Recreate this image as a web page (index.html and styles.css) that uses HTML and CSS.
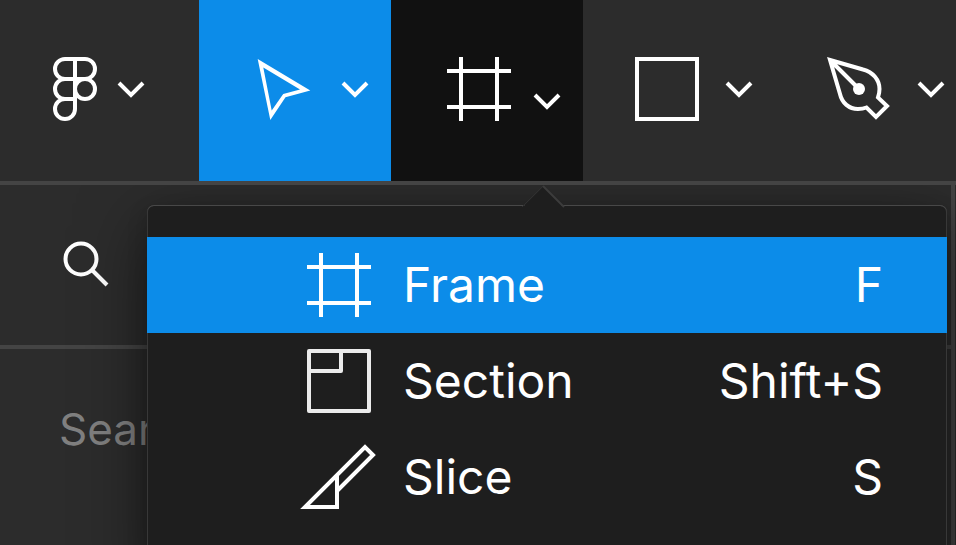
FILE: index.html
```html
<!DOCTYPE html>
<html lang="en">
<head>
<meta charset="utf-8">
<title>Design editor</title>
<link rel="stylesheet" href="styles.css">
</head>
<body>
<div class="app">
  <header class="toolbar">
    <button class="tool tool-main" aria-label="Main menu">
      <svg class="icon" viewBox="0 0 80 80"><path d="M52 9H42a10 10 0 0 0 0 20H62a10 10 0 0 0 0-20H52V59a10 10 0 1 1-10-10H52M52 29H42a10 10 0 0 0 0 20"/><circle cx="62" cy="39" r="10"/></svg>
      <svg class="chevron" viewBox="0 0 28 28"><path d="M2 7l12 12L26 7"/></svg>
    </button>
    <button class="tool tool-selected" aria-label="Move">
      <svg class="icon" viewBox="0 0 80 80"><path class="solid" fill-rule="evenodd" d="M10.7 9L63.3 40.5L38.5 47.3L23.3 70ZM16.3 17.5L24.7 60.5L36.2 44L53 39.5Z"/></svg>
      <svg class="chevron" viewBox="0 0 28 28"><path d="M2 7l12 12L26 7"/></svg>
    </button>
    <button class="tool tool-open" aria-label="Region tools" aria-expanded="true">
      <svg class="icon" viewBox="0 0 80 80"><path d="M22 7v64M58 7v64M8 21h64M8 57h64"/></svg>
      <svg class="chevron" viewBox="0 0 28 28"><path d="M2 7l12 12L26 7"/></svg>
    </button>
    <button class="tool" aria-label="Shape tools">
      <svg class="icon" viewBox="0 0 80 80"><path d="M6 9h60v60H6z"/></svg>
      <svg class="chevron" viewBox="0 0 28 28"><path d="M2 7l12 12L26 7"/></svg>
    </button>
    <button class="tool" aria-label="Drawing tools">
      <svg class="icon" viewBox="0 0 80 80"><path d="M7 10L40 19.5C50 22 56.5 30 56.5 39C56.5 42 56 44.500 55 47.500L64 56L53 67L43.500 57.500C41 58.500 38 59 35 59C26 59 19 53 17 44ZM7 10L36 39"/><circle class="solid" cx="36" cy="39" r="6"/></svg>
      <svg class="chevron" viewBox="0 0 28 28"><path d="M2 7l12 12L26 7"/></svg>
    </button>
  </header>

  <aside class="panel">
    <div class="search-row">
      <button class="search" aria-label="Search">
        <svg class="search-icon" viewBox="0 0 48 48"><circle cx="19" cy="19" r="15.5"/><path d="M30 30l15 15"/></svg>
      </button>
    </div>
    <p class="hint">Search</p>
  </aside>

  <div class="menu" role="menu">
    <svg class="arrow" viewBox="0 0 44 24"><path class="arrow-fill" d="M0 24L22 2L44 24z"/><path class="arrow-left" d="M1 22L22 1"/><path class="arrow-right" d="M22 1L43 22"/></svg>
    <button class="item item-active" role="menuitem">
      <svg class="icon" viewBox="0 -1 80 80"><path d="M22 7v64M58 7v64M8 21h64M8 57h64"/></svg>
      <span class="label">Frame</span><span>F</span>
    </button>
    <button class="item" role="menuitem">
      <svg class="icon icon-section" viewBox="0 -1 80 80"><path d="M10 9h60v60H10zM10 29H42V9"/></svg>
      <span class="label">Section</span><span>Shift+S</span>
    </button>
    <button class="item" role="menuitem">
      <svg class="icon icon-slice" viewBox="0 -1 80 80"><path d="M38 37V69H6L66 9L74 17L38 53"/></svg>
      <span class="label">Slice</span><span>S</span>
    </button>
  </div>
</div>
</body>
</html>
```
FILE: styles.css
```css
* {
  box-sizing: border-box;
}

body {
  margin: 0;
  background: #2c2c2c;
  color: #fff;
  font-family: Inter, "Liberation Sans", sans-serif;
}

button {
  border: 0;
  margin: 0;
  background: none;
  color: inherit;
  font: inherit;
  text-align: left;
}

svg {
  display: block;
  flex: none;
  fill: none;
  stroke: #fff;
  stroke-width: 4;
}

.solid {
  fill: #fff;
  stroke: none;
}

.app {
  position: relative;
  display: flex;
  flex-direction: column;
  height: 100vh;
  overflow: hidden;
}

.toolbar {
  z-index: 1;
  display: flex;
  flex: none;
  overflow: hidden;
  border-bottom: 4px solid #444;
  background: #2c2c2c;
}

.tool {
  display: flex;
  flex: none;
  align-items: center;
  gap: 14px;
  width: 192px;
  padding: 50px 0 51px 48px;
}

.tool-main {
  width: 199px;
  padding-left: 23px;
}

.tool-selected {
  background: #0c8ce9;
}

.tool-open {
  background: #111;
}

.tool-open .chevron {
  margin-top: 24px;
}

.icon {
  width: 80px;
  height: 80px;
}

.chevron {
  width: 28px;
  height: 28px;
}

.panel {
  flex: 1;
  margin-right: 1px;
  border-right: 4px solid #444;
}

.search-row {
  height: 164px;
  padding: 55px 62px;
  border-bottom: 4px solid #444;
}

.search {
  padding: 0;
}

.search-icon {
  width: 48px;
  height: 48px;
}

.hint {
  margin: 0;
  padding: 48px 59px;
  color: #808080;
  font-size: 44px;
  line-height: 64px;
}

.menu {
  position: absolute;
  top: 205px;
  right: 9px;
  bottom: -32px;
  left: 147px;
  padding-top: 32px;
  border-radius: 7px;
  background: #1e1e1e;
  box-shadow: inset 0 1px 0 #484848, inset 0 0 0 1px #383838, 0 20px 68px rgba(0, 0, 0, 0.5), 0 8px 20px rgba(0, 0, 0, 0.2);
}

.arrow {
  position: absolute;
  top: -20px;
  left: 374px;
  width: 44px;
  height: 24px;
  stroke-width: 1;
}

.arrow-fill {
  fill: #1e1e1e;
  stroke: none;
}

.arrow-left {
  stroke: #303030;
}

.arrow-right {
  stroke: #3c3c3c;
  stroke-width: 2;
}

.item {
  display: flex;
  align-items: center;
  gap: 24px;
  width: 100%;
  height: 96px;
  padding: 0 64px 0 152px;
  font-size: 48px;
  line-height: 64px;
}

.item-active {
  background: #0c8ce9;
}

.label {
  flex: 1;
}

.icon-section {
  stroke: #ebebeb;
  stroke-linejoin: round;
}
```
